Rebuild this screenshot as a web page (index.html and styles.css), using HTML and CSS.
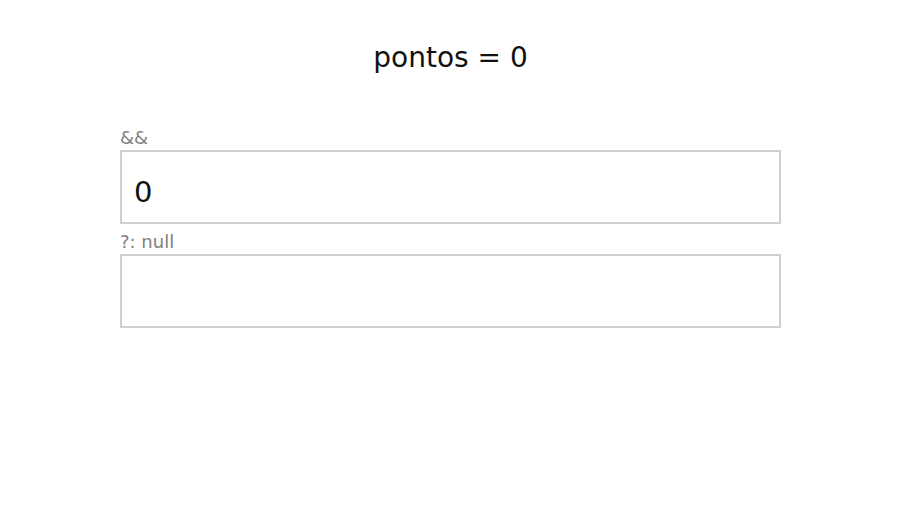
FILE: index.html
```html
<!DOCTYPE html>
<html>
<head>
<meta charset="utf-8">
<link rel="stylesheet" href="styles.css">
</head>
<body>
<div class="page">
  <h1 class="title">pontos = 0</h1>
  <div class="fields">
    <label class="label">&amp;&amp;</label>
    <div class="box">0</div>
    <label class="label">?: null</label>
    <div class="box"></div>
  </div>
</div>
</body>
</html>
```
FILE: styles.css
```css
html, body {
  margin: 0;
  padding: 0;
  background: #fff;
}
body {
  font-family: "DejaVu Sans", sans-serif;
  color: #111;
}
.page {
  width: 661px;
  padding: 41px 0 0 120px;
}
.title {
  margin: 0;
  font-size: 28px;
  font-weight: normal;
  text-align: center;
  line-height: 33px;
}
.fields {
  display: flex;
  flex-direction: column;
  margin-top: 53px;
}
.label {
  font-size: 18px;
  color: #808080;
  line-height: 21px;
  margin-bottom: 2px;
}
.box {
  box-sizing: border-box;
  height: 74px;
  border: 2px solid #d0d0d0;
  padding: 10px 12px 0;
  font-size: 29px;
  line-height: 60px;
  margin-bottom: 7px;
}
```
